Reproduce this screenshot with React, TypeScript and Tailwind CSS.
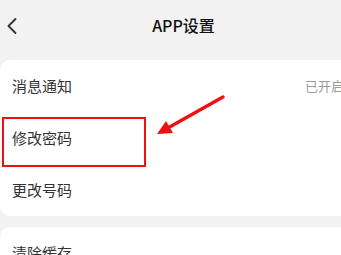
import { ChevronLeft } from "lucide-react";

const font = { fontFamily: '"Noto Sans CJK SC", "Noto Sans", sans-serif' };

function Row({ label, value }: { label: string; value?: string }) {
  return (
    <div className="h-[52px] flex items-center justify-between pl-3 pr-[12px]">
      <span className="text-[15px] text-[#333333]">{label}</span>
      {value && <span className="text-[13px] text-[#9a9a9a]">{value}</span>}
    </div>
  );
}

export default function App() {
  return (
    <div className="relative w-[341px] h-[255px] overflow-hidden bg-[#f2f2f2]" style={font}>
      <div className="relative h-[60px] flex items-start justify-center pt-[13px] pl-[26px]">
        <ChevronLeft className="absolute left-[-2px] top-[12px] w-7 h-7 text-[#333333]" strokeWidth={1.6} />
        <span className="text-[16px] font-medium text-[#111111] leading-6">APP设置</span>
      </div>

      <div className="w-[356px] bg-white rounded-[10px]">
        <Row label="消息通知" value="已开启" />
        <Row label="修改密码" />
        <Row label="更改号码" />
      </div>

      <div className="w-[356px] bg-white rounded-[10px] mt-[11px]">
        <Row label="清除缓存" />
      </div>

      <div className="absolute left-[2px] top-[117px] w-[144px] h-[50px] border-[2.5px] border-[#f01010]" />

      <svg className="absolute left-0 top-0" width="341" height="255" viewBox="0 0 341 255">
        <line x1="223" y1="97" x2="166" y2="129" stroke="#f01010" strokeWidth="3.5" strokeLinecap="round" />
        <polygon points="157,134 166,121 173,133" fill="#f01010" />
      </svg>
    </div>
  );
}
